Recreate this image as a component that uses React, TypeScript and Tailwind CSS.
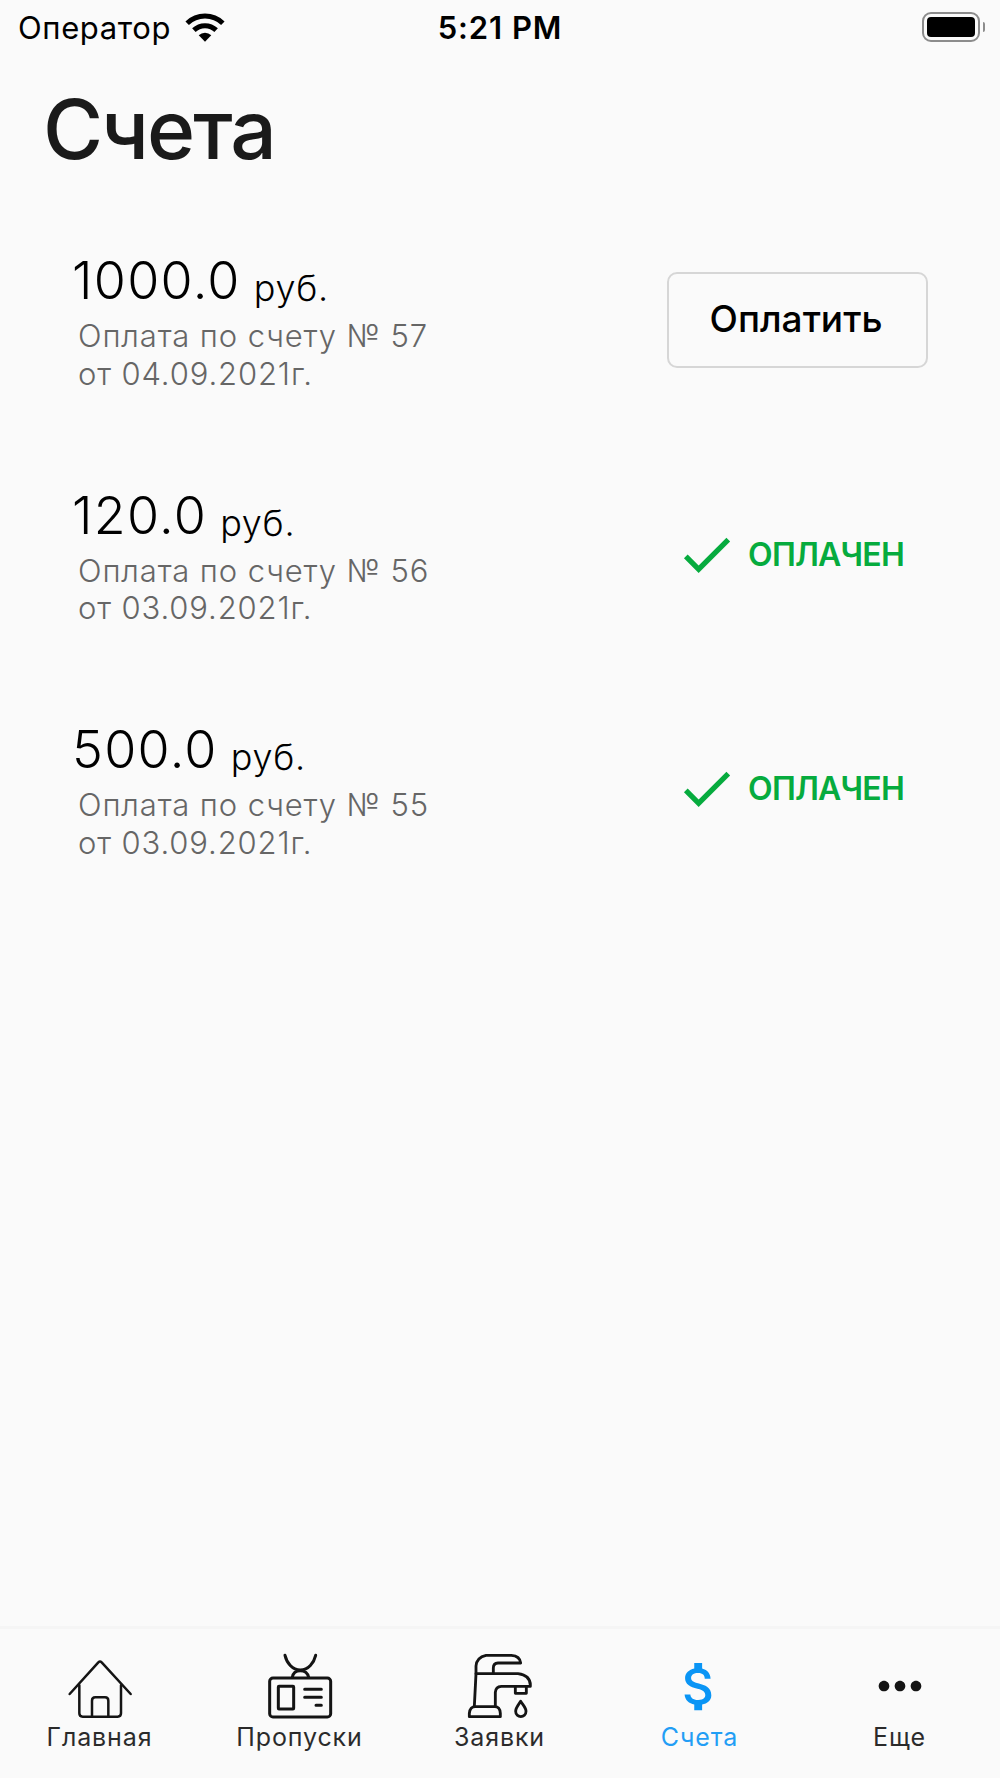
import { MdAttachMoney, MdCheck, MdMoreHoriz } from "react-icons/md";

const invoices = [
  { amount: "1000.0", number: 57, date: "04.09.2021", paid: false },
  { amount: "120.0", number: 56, date: "03.09.2021", paid: true },
  { amount: "500.0", number: 55, date: "03.09.2021", paid: true },
];

function WifiIcon() {
  return (
    <svg viewBox="0 0 120 87" className="w-10 h-[29px]" fill="none" stroke="black" strokeWidth={15}>
      <path d="M6.5 30.6A77 77 0 0 1 113.5 30.6" />
      <path d="M26.6 51.5A48 48 0 0 1 93.4 51.5" />
      <path d="M60 86L41.2 66.6A27 27 0 0 1 78.8 66.6Z" fill="black" stroke="none" />
    </svg>
  );
}

function HomeIcon() {
  return (
    <svg viewBox="0 0 216 216" className="size-[72px]" fill="none" stroke="currentColor" strokeWidth={7.5} strokeLinecap="round" strokeLinejoin="round">
      <path d="M17 132L103 37Q108 32 113 37L200 132" />
      <path d="M46 106V190Q46 200 56 200H161Q171 200 171 190V106" />
      <path d="M84 198V152Q84 142 94 142H123Q133 142 133 152V198" />
    </svg>
  );
}

function PassIcon() {
  return (
    <svg viewBox="0 0 216 216" className="size-[72px]" fill="none" stroke="currentColor" strokeWidth={9} strokeLinecap="round" strokeLinejoin="round">
      <rect x="17" y="84" width="183" height="117" rx="10" />
      <rect x="43" y="109" width="46" height="68" rx="2" />
      <path d="M122 118H172M122 142H172M156 166H172" />
      <path d="M63 16C68 38 85 60 109 60C133 60 150 38 155 16" />
      <path d="M85 82C87 68 97 62 109 62C121 62 131 68 134 82" />
    </svg>
  );
}

function FaucetIcon() {
  return (
    <svg viewBox="0 0 216 216" className="size-[72px]" fill="none" stroke="currentColor" strokeWidth={8.5} strokeLinecap="round" strokeLinejoin="round">
      <path d="M36 71V48Q38 22 66 16H142Q168 18 170 39H102Q88 40 88 54V70" />
      <path d="M31 169L36 71H162Q201 76 199 109H112Q95 110 94 127V169" />
      <path d="M16 200V190Q18 170 34 170H92Q108 170 109 190V200Z" />
      <path d="M154 110V130H187V110" />
      <path d="M170 154C164 164 155 173 155 184C155 205 186 205 186 184C186 173 176 164 170 154Z" />
    </svg>
  );
}

const tabs = [
  { title: "Главная", icon: <HomeIcon /> },
  { title: "Пропуски", icon: <PassIcon /> },
  { title: "Заявки", icon: <FaucetIcon /> },
  { title: "Счета", icon: <MdAttachMoney className="size-[63px]" />, active: true },
  { title: "Еще", icon: <MdMoreHoriz className="size-16" /> },
];

export default function App() {
  return (
    <div className="flex h-[1778px] w-[1000px] flex-col bg-[#fafafa] font-['Inter','Liberation_Sans',sans-serif] text-black">
      {/* Status bar */}
      <div className="grid h-[54px] grid-cols-3 items-center pl-[18px] pr-[15px]">
        <div className="flex items-center gap-3.5">
          <span className="text-[31px] leading-none tracking-[0.02em]">Оператор</span>
          <WifiIcon />
        </div>
        <span className="pr-[3px] text-center text-[31px] leading-none font-semibold tracking-[0.03em]">5:21 PM</span>
        <div className="flex items-center justify-end gap-[3px]">
          <div className="h-[30px] w-[58px] rounded-[9px] border-[2.5px] border-[#8c8c8c] p-[3px]">
            <div className="h-full w-full rounded-[4px] bg-black" />
          </div>
          <div className="h-2.5 w-[2px] rounded-r-full bg-[#8c8c8c]" />
        </div>
      </div>

      <h1 className="mt-[28px] pl-[43px] text-[82px] leading-[96px] font-medium tracking-[-0.025em] text-[#1a1a1a]">Счета</h1>

      {/* Invoices */}
      <div className="mt-[60px] flex flex-1 flex-col">
        {invoices.map((invoice) => (
          <div key={invoice.number} className="flex h-[234.5px] items-start justify-between pr-[72px] pl-[72px]">
            <div>
              <div className="flex h-[79px] items-baseline gap-[13px]">
                <span className="text-[52px] leading-[86px] font-light tracking-[0.025em]">{invoice.amount}</span>
                <span className="relative top-[2px] text-[36px] leading-none font-light tracking-[0.02em]">руб.</span>
              </div>
              <p className="pl-1.5 text-[31px] leading-[37.5px] font-light tracking-[0.028em] text-[#666666]">
                Оплата по счету № {invoice.number}
                <br />
                от {invoice.date}г.
              </p>
            </div>
            {invoice.paid ? (
              <div className="mt-[50px] flex items-center gap-2.5 pr-[24px] text-[#06ab3e]">
                <MdCheck className="size-[63px]" />
                <span className="pt-px text-[32px] leading-none font-semibold tracking-[-0.025em]">ОПЛАЧЕН</span>
              </div>
            ) : (
              <button className="mt-[34px] h-24 w-[261px] rounded-[10px] border-2 border-[#d6d6d6] pr-[3px] pb-[3px] text-[37px] font-medium">
                Оплатить
              </button>
            )}
          </div>
        ))}
      </div>

      {/* Tab bar */}
      <nav className="grid h-[152px] grid-cols-5 border-t-[3px] border-[#f5f5f5]">
        {tabs.map((tab) => (
          <div key={tab.title} className={tab.active ? "flex flex-col items-center pr-px text-[#0a95f5]" : "flex flex-col items-center pr-px text-[#141414]"}>
            <div className="mt-[21px] flex h-[72px] items-center">{tab.icon}</div>
            <span className="text-[25px] leading-[30px] tracking-[0.035em] opacity-90">{tab.title}</span>
          </div>
        ))}
      </nav>
    </div>
  );
}
